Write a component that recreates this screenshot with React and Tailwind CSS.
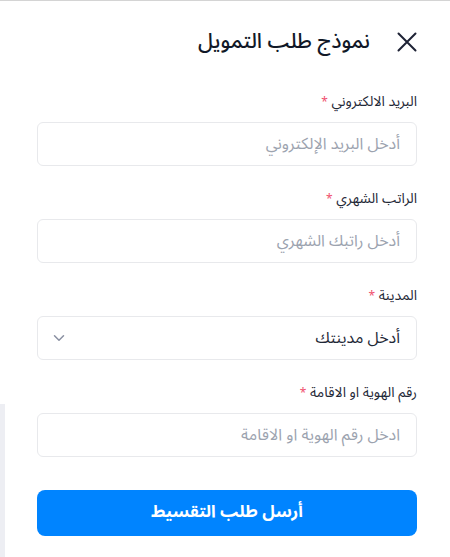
import React from 'react';
import { ChevronDown } from 'lucide-react';

const font = { fontFamily: '"Noto Sans Arabic", "DejaVu Sans", "Noto Sans", sans-serif' };

function Label({ children }) {
  return (
    <label className="block text-[14px] text-[#1f2937] mb-[9px] leading-[20px]">
      {children} <span className="text-[#f0506e] text-[12px]">*</span>
    </label>
  );
}

function Field({ label, placeholder }) {
  return (
    <div>
      <Label>{label}</Label>
      <input
        placeholder={placeholder}
        className="w-full h-[44px] rounded-[6px] border border-[#e8e9ec] px-[16px] text-[16px] text-[#1f2937] placeholder-[#9ca3af] outline-none bg-white"
      />
    </div>
  );
}

export default function App() {
  return (
    <div dir="rtl" style={font} className="relative w-[450px] h-[557px] bg-white border-t border-[#d4d4d4] overflow-hidden">
      <div className="absolute left-0 top-[403px] bottom-0 w-[5px] bg-[#edeef3]" />
      <div className="pl-[37px] pr-[33px]">
        <div className="flex items-center gap-[27px] h-[91px] pb-[9px]">
          <svg width="20" height="20" viewBox="0 0 20 20" className="shrink-0">
            <path d="M1.5 1.5 L18.5 18.5 M18.5 1.5 L1.5 18.5" stroke="#1e2235" strokeWidth="2" strokeLinecap="round" />
          </svg>
          <h2 className="text-[21px] font-medium text-[#111827]">نموذج طلب التمويل</h2>
        </div>
        <div className="flex flex-col gap-[23px]">
          <Field label="البريد الالكتروني" placeholder="أدخل البريد الإلكتروني" />
          <Field label="الراتب الشهري" placeholder="أدخل راتبك الشهري" />
          <div>
            <Label>المدينة</Label>
            <div className="w-full h-[44px] rounded-[6px] border border-[#e8e9ec] pr-[16px] pl-[12px] flex items-center justify-between">
              <span className="text-[16px] text-[#1f2937]">أدخل مدينتك</span>
              <ChevronDown className="text-[#8a90a2]" size={18} strokeWidth={2} />
            </div>
          </div>
          <Field label="رقم الهوية او الاقامة" placeholder="ادخل رقم الهوية او الاقامة" />
        </div>
        <button className="mt-[33px] w-full h-[46px] rounded-[8px] bg-[#0084ff] text-white text-[17px] font-bold">
          أرسل طلب التقسيط
        </button>
      </div>
    </div>
  );
}
